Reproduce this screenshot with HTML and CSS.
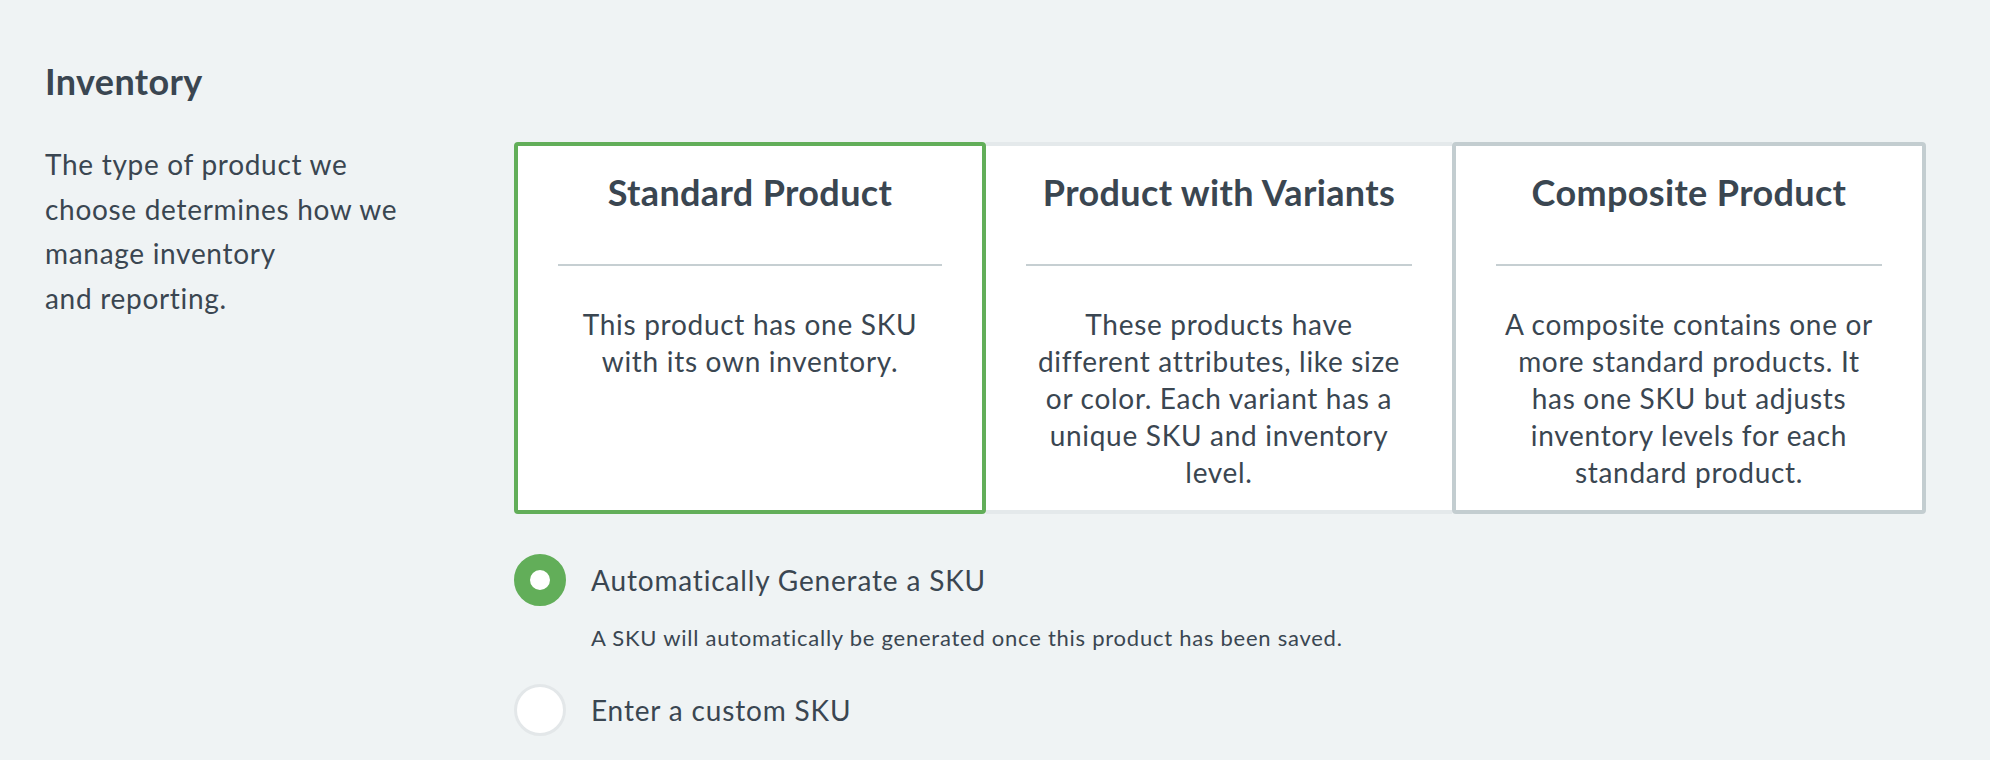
FILE: index.html
```html
<!DOCTYPE html>
<html lang="en">
<head>
<meta charset="utf-8">
<title>Inventory</title>
<link rel="stylesheet" href="styles.css">
</head>
<body>
<section class="section">
  <h2 class="section-title">Inventory</h2>
  <div class="section-row">
    <p class="section-desc">The type of product we choose determines how we manage inventory<br>and reporting.</p>
    <div class="section-main">
      <div class="cards">
        <div class="card card-selected">
          <h3 class="card-title">Standard Product</h3>
          <hr class="card-rule">
          <p class="card-text">This product has one SKU with its own inventory.</p>
        </div>
        <div class="card card-middle">
          <h3 class="card-title">Product with Variants</h3>
          <hr class="card-rule">
          <p class="card-text">These products have different attributes, like size or color. Each variant has a unique SKU and inventory level.</p>
        </div>
        <div class="card card-outline">
          <h3 class="card-title">Composite Product</h3>
          <hr class="card-rule">
          <p class="card-text">A composite contains one or more standard products. It has one SKU but adjusts inventory levels for each standard product.</p>
        </div>
      </div>
      <div class="options">
        <div class="option">
          <span class="radio radio-on"></span>
          <span class="option-label">Automatically Generate a SKU</span>
        </div>
        <p class="option-help">A SKU will automatically be generated once this product has been saved.</p>
        <div class="option option-last">
          <span class="radio"></span>
          <span class="option-label">Enter a custom SKU</span>
        </div>
      </div>
    </div>
  </div>
</section>
</body>
</html>
```
FILE: styles.css
```css
* { box-sizing: border-box; }
html, body { margin: 0; padding: 0; }
body {
  background: #eff3f4;
  color: #3a4651;
  font-family: Lato, "Open Sans", sans-serif;
  width: 1990px;
  height: 760px;
  overflow: hidden;
}
.section {
  padding: 58px 64px 0 45px;
}
.section-title {
  margin: 0 0 38px;
  font-size: 36px;
  line-height: 46px;
  font-weight: 700;
  letter-spacing: 0.01em;
  color: #3a4651;
}
.section-row {
  display: flex;
  align-items: flex-start;
}
.section-desc {
  width: 469px;
  flex: 0 0 469px;
  margin: 0;
  padding-right: 90px;
  font-size: 28px;
  line-height: 44.5px;
  letter-spacing: 0.025em;
}
.section-main {
  flex: 1 1 auto;
}
.cards {
  display: grid;
  grid-template-columns: 472px 466px 474px;
  height: 372px;
}
.card {
  background: #fff;
  text-align: center;
  padding: 24px 40px 0;
  border: 4px solid transparent;
}
.card-selected {
  border-color: #62ae59;
  border-radius: 4px;
}
.card-middle {
  border-color: #e4e9eb;
  border-left: 0;
  border-right: 0;
}
.card-outline {
  border-color: #c3cdd0;
  border-radius: 4px;
}
.card-title {
  margin: 0;
  font-size: 36px;
  line-height: 44px;
  font-weight: 700;
  letter-spacing: 0.01em;
  color: #3a4651;
}
.card-rule {
  border: 0;
  height: 2px;
  background: #c6cfd2;
  margin: 50px 0 40px;
}
.card-text {
  max-width: 376px;
  margin: 0 auto;
  font-size: 28px;
  line-height: 37px;
  letter-spacing: 0.025em;
}
.options {
  padding-top: 40px;
}
.option {
  display: flex;
  align-items: center;
  gap: 25px;
  height: 52px;
}
.radio {
  width: 52px;
  height: 52px;
  flex: 0 0 52px;
  border-radius: 50%;
  background: #fff;
  border: 3px solid #e3e7e9;
}
.radio-on {
  border: 16px solid #62ae59;
}
.option-label {
  font-size: 28px;
  line-height: 34px;
  letter-spacing: 0.03em;
}
.option-help {
  margin: 19px 0 33px 77px;
  font-size: 22px;
  line-height: 26px;
  letter-spacing: 0.034em;
}
```
